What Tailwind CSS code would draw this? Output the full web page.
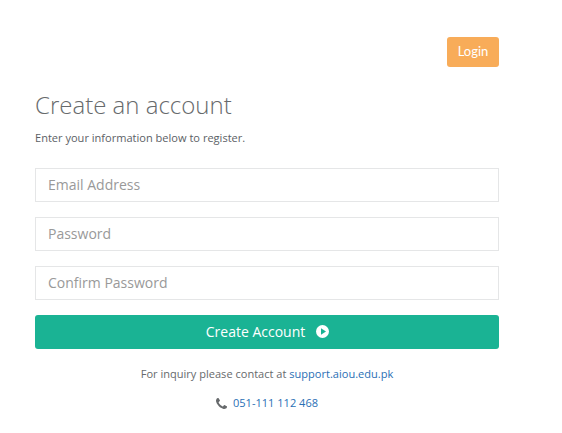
<!DOCTYPE html>
<html lang="en">
<head>
    <meta charset="UTF-8">
    <meta name="viewport" content="width=device-width, initial-scale=1.0">
    <title>Create an account</title>
    <script src="https://cdn.jsdelivr.net/npm/@tailwindcss/browser@4"></script>
</head>
<body class="bg-white font-['Open_Sans',sans-serif] overflow-hidden">
    <div class="w-[464px] ml-[35px] pt-[37px]">
        <div class="flex justify-end">
            <a href="#" class="flex items-center justify-center w-[52px] h-[30px] rounded-[3px] bg-[#f8ac59] text-white text-[13px] font-['Lato',sans-serif]">Login</a>
        </div>

        <h1 class="mt-[21px] h-[34px] leading-[34px] text-[24px] font-light text-[#676a6c]">Create an account</h1>
        <p class="mt-[7px] h-[18px] leading-[18px] text-[11.05px] text-[#5c6166]">Enter your information below to register.</p>

        <form class="mt-[21px] flex flex-col gap-[15px]">
            <input type="text" placeholder="Email Address" class="w-full h-[34px] px-3 pb-[2px] border border-[#e5e6e7] bg-white text-[14px] placeholder:text-[#999999] outline-none">
            <input type="password" placeholder="Password" class="w-full h-[34px] px-3 pb-[2px] border border-[#e5e6e7] bg-white text-[14px] placeholder:text-[#999999] outline-none">
            <input type="password" placeholder="Confirm Password" class="w-full h-[34px] px-3 pb-[2px] border border-[#e5e6e7] bg-white text-[14px] placeholder:text-[#999999] outline-none">
            <button type="button" class="flex items-center justify-center gap-[11px] w-full h-[34px] pl-[1px] pb-[2px] rounded-[3px] bg-[#1ab394] text-white text-[14px]">
                Create Account
                <svg class="w-[13px] h-[13px] mt-[1px]" viewBox="0 0 13 13">
                    <circle cx="6.5" cy="6.5" r="6.5" fill="#fff"/>
                    <path d="M5 3.2 L10 6.5 L5 9.8 Z" fill="#1ab394"/>
                </svg>
            </button>
        </form>

        <p class="mt-[16px] h-[18px] leading-[18px] text-center text-[11.05px] text-[#676a6c]">For inquiry please contact at <a href="#" class="text-[#2a6fb5]">support.aiou.edu.pk</a></p>
        <p class="mt-[11px] h-[18px] flex items-center justify-center gap-[6px] text-[11.05px] text-[#2a6fb5]">
            <svg class="w-[11px] h-[11px]" viewBox="0 0 1408 1408"><path fill="#676a6c" d="M1408 1112q0 27-10 70.5t-21 68.5q-21 50-122 106-94 51-186 51-27 0-53-3.5t-57.5-12.5-47-14.500-55.500-20.500-49-18q-98-35-175-83-127-79-264-216T151 777q-48-77-83-175-3-9-18-49t-20.500-55.500-14.500-47T2.500 393 0 340q0-92 51-186Q107 53 157 32q25-11 68.500-21T296 1q14 0 21 3 18 6 53 76 11 19 30 54t35 63.500 31 53.500q3 4 17.500 25t21.500 35.500 7 28.500q0 20-28.500 50t-62 55-62 53-28.500 46q0 9 5 22.500t8.500 20.500 14 24 11.500 19q76 137 174 235t235 174q2 1 19 11.500t24 14 20.500 8.500 22.500 5q18 0 46-28.500t53-62 55-62 50-28.500q14 0 28.500 7t35.500 21.500 25 17.500q25 15 53.500 31t63.500 35 54 30q70 35 76 53 3 7 3 21z"/></svg>
            051-111 112 468
        </p>
    </div>
</body>
</html>
